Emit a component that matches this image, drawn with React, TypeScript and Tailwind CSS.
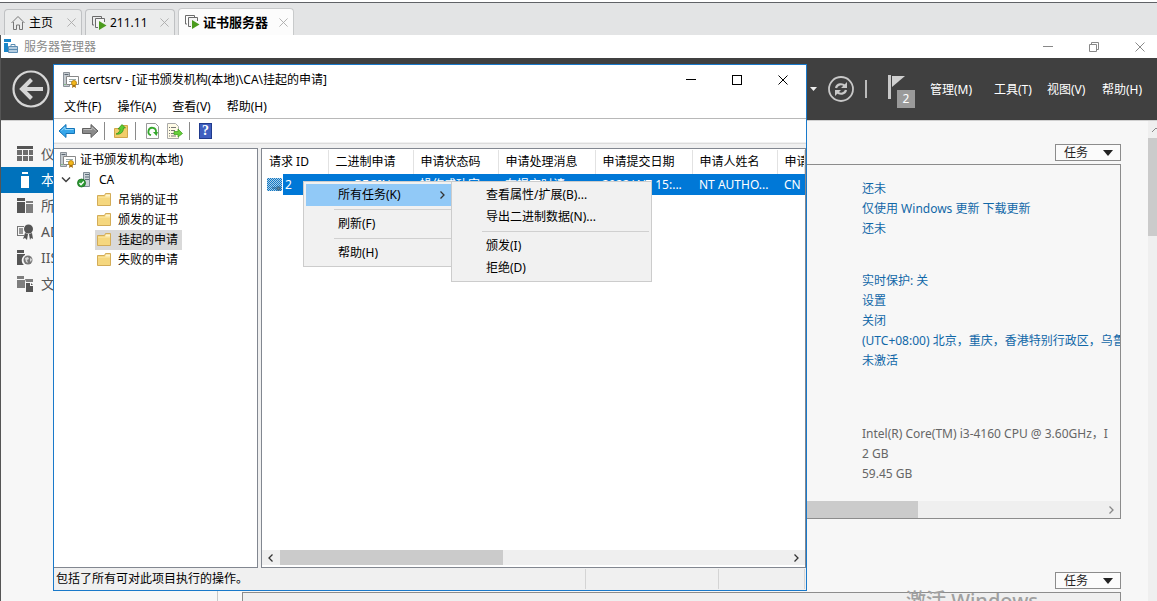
import React from "react";

const sideItems = [
  { label: "仪表板", icon: "dashboard" },
  { label: "本地服务器", icon: "local", active: true },
  { label: "所有服务器", icon: "all" },
  { label: "AD CS", icon: "cert" },
  { label: "IIS", icon: "iis" },
  { label: "文件和存储服务", icon: "files" },
];

const folders = ["吊销的证书", "颁发的证书", "挂起的申请", "失败的申请"];

const SideIcon: React.FC<{ name: string }> = ({ name }) => (
  <svg width="18" height="16" viewBox="0 0 18 16" fill="currentColor" className="shrink-0">
    {name === "dashboard" && (
      <>
        <path d="M1 0h16v3H1z" />
        <path d="M1 4h5v5H1zM7 4h5v5H7zM13 4h4v5h-4zM1 10h5v5H1zM7 10h5v5H7zM13 10h4v5h-4z" opacity=".85" />
      </>
    )}
    {name === "local" && <path d="M6 0h6v2H6zM5 4h8v12H5z" />}
    {name === "all" && (
      <>
        <path d="M1 0h8v3H1zM1 4h8v11H1z" />
        <path d="M10 3h7v2h-7zM10 6h7v9h-7z" opacity=".75" />
      </>
    )}
    {name === "cert" && (
      <>
        <path d="M1 2h7v1H2v8h6v1H1z" opacity=".8" />
        <path d="M3 4h4v6H3z" opacity=".6" />
        <circle cx="12.5" cy="5" r="4.5" />
        <path d="M9 9l3 1-1 6-2-2-2 1zM16 9l-3 1 1 6 1-2 2 1z" />
      </>
    )}
    {name === "iis" && (
      <>
        <path d="M1 0h7v3H1zM1 4h8v1a6 6 0 0 0-1 10H1z" />
        <circle cx="12" cy="10" r="4.5" opacity=".8" />
        <path d="M9 8l3-1 1 2-2 1 1 3-2-1zM14 8l2 1-1 3-1-1z" fill="#d8d8d8" />
      </>
    )}
    {name === "files" && (
      <>
        <path d="M1 0h7v3H1zM1 4h8v8H1zM9 3h8v3h-7z" opacity=".75" />
        <path d="M10 7h4v3h3v6h-7z" />
        <path d="M15 7l2 2h-2z" />
      </>
    )}
  </svg>
);

const FolderIcon: React.FC = () => (
  <svg width="16" height="16" viewBox="0 0 16 16" className="shrink-0">
    <path d="M1.5 3.5h7l1-2h5v12h-13z" fill="#f5d77f" stroke="#d3ac58" />
    <path d="M10 2.5h4v2H9z" fill="#fff4c8" />
    <path d="M2 5h7.5l1-1H14v1.5H2z" fill="#fbe9ac" />
  </svg>
);

const CertIcon: React.FC = () => (
  <svg width="16" height="16" viewBox="0 0 16 16" className="shrink-0">
    <path d="M.5.5h6v14h-6z" fill="#c5cbd0" stroke="#8b9299" />
    <path d="M1.5 2.5h4" stroke="#5b6670" />
    <path d="M3.5 4.5h12v8h-12z" fill="#fff" stroke="#888" />
    <path d="M6 7.5h7M6 9.5h3" stroke="#9aa" />
    <circle cx="11" cy="11" r="2.5" fill="#f3b81c" stroke="#b17a08" strokeWidth=".8" />
    <path d="M9.5 13l-.5 3 2-1.2 2 1.2-.5-3z" fill="#a8700c" />
    <path d="M1.5 12h1v1h-1z" fill="#3fa83f" />
  </svg>
);

const VmIcon: React.FC = () => (
  <svg width="16" height="16" viewBox="0 0 16 16" className="shrink-0">
    <path d="M3 10H1.5V1.5h9V3" fill="none" stroke="#6b6b6b" />
    <path d="M13.5 7V3.5h-9v9H7" fill="#f4f4f4" stroke="#6b6b6b" />
    <path d="M8 6l7.5 4.5L8 15z" fill="#4b9b1d" />
  </svg>
);

const Cross: React.FC<{ size: number; className?: string }> = ({ size, className }) => (
  <svg width={size} height={size} viewBox="0 0 10 10" className={className}>
    <path d="M.5.5l9 9M9.5.5l-9 9" stroke="currentColor" fill="none" />
  </svg>
);

const Chevron: React.FC<{ className?: string }> = ({ className }) => (
  <svg width="8" height="8" viewBox="0 0 8 8" className={className}>
    <path d="M2.5.5L6 4 2.5 7.5" stroke="currentColor" strokeWidth="1.3" fill="none" />
  </svg>
);

const TaskButton: React.FC = () => (
  <button className="flex h-[17px] w-[66px] items-center justify-between border border-[#8c8c8c] bg-[#fbfbfb] pl-2 pr-[7px] text-[#222]">
    任务
    <svg width="10" height="6" viewBox="0 0 10 6">
      <path d="M0 0h10L5 6z" fill="#222" />
    </svg>
  </button>
);

const Tabs: React.FC = () => (
  <div className="flex h-[35px] shrink-0 items-end gap-[3px] border-t-2 border-white bg-[#e3e4e5] pl-1 shadow-[inset_0_1px_0_#606266]">
    <div className="flex h-[26px] w-[78px] items-center rounded-t border border-b-0 border-[#bfc1c3] bg-[#ebecec] px-[5px]">
      <svg width="16" height="16" viewBox="0 0 16 16" fill="none" stroke="#777">
        <path d="M1.5 8L8 1.5 14.5 8M3.5 7v7.5h3V10h3v4.5h3V7" />
      </svg>
      <button className="ml-[3px]">主页</button>
      <Cross size={9} className="ml-auto text-[#aaa]" />
    </div>
    <div className="flex h-[26px] w-[90px] items-center rounded-t border border-b-0 border-[#bfc1c3] bg-[#ebecec] px-[5px]">
      <VmIcon />
      <button className="ml-[3px]">211.11</button>
      <Cross size={9} className="ml-auto text-[#aaa]" />
    </div>
    <div className="flex h-[27px] w-[116px] items-center rounded-t border border-b-0 border-[#c8cacb] bg-[#fcfcfc] px-[5px]">
      <VmIcon />
      <button className="ml-[3px] text-[13px] font-bold">证书服务器</button>
      <Cross size={9} className="ml-auto text-[#aaa]" />
    </div>
  </div>
);

const Header: React.FC = () => (
  <header className="flex h-[62px] shrink-0 items-center bg-[#404040] pl-[11px] pr-[13px] text-white">
    <button aria-label="后退">
      <svg width="38" height="38" viewBox="0 0 38 38" fill="none" stroke="#d6d6d6">
        <circle cx="19" cy="19" r="17.5" strokeWidth="2.2" />
        <path d="M31 19H10M19.5 9.5L10 19l9.5 9.5" strokeWidth="4" />
      </svg>
    </button>
    <div className="ml-auto flex items-center">
      <svg width="8" height="4" viewBox="0 0 8 4" className="mr-[9px]">
        <path d="M0 0h7L3.5 4z" fill="#eee" />
      </svg>
      <button aria-label="刷新">
        <svg width="28" height="28" viewBox="0 0 28 28" fill="none" stroke="#c8c8c8">
          <circle cx="14" cy="14" r="12" strokeWidth="1.8" />
          <path d="M9 13c1-4 6-5 9-2M19 15c-1 4-6 5-9 2" strokeWidth="2.2" />
          <path d="M20 7v6h-6zM8 21v-6h6z" fill="#c8c8c8" stroke="none" />
        </svg>
      </button>
      <span className="ml-2.5 h-[18px] w-0.5 bg-[#bbb]" />
      <button aria-label="通知" className="relative ml-5 h-[38px] w-7">
        <svg width="20" height="26" viewBox="0 0 20 26" className="absolute left-0 top-1">
          <path d="M1 1h3v24H1z" fill="#c8c8c8" />
          <path d="M5 2h13L5 13z" fill="#d0d0d0" />
        </svg>
        <span className="absolute bottom-0 right-0 h-[18px] w-[18px] bg-[#9a9a9a] text-center leading-[18px]">2</span>
      </button>
      <nav className="ml-[15px] flex pt-0.5">
        <button className="w-16 text-left">管理(M)</button>
        <button className="w-[53px] text-left">工具(T)</button>
        <button className="w-[55px] text-left">视图(V)</button>
        <button className="w-[42px] whitespace-nowrap text-left">帮助(H)</button>
      </nav>
    </div>
  </header>
);

const Properties: React.FC = () => (
  <div className="flex h-[355px] flex-col overflow-hidden border border-[#8c8c8c]">
    <div className="ml-auto w-[258px] flex-1 whitespace-nowrap pt-3.5 leading-5 text-[#1168a8]">
      <a href="#" className="block">还未</a>
      <a href="#" className="block">仅使用 Windows 更新 下载更新</a>
      <a href="#" className="block">还未</a>
      <div className="mt-8">
        <a href="#" className="block">实时保护: 关</a>
        <a href="#" className="block">设置</a>
        <a href="#" className="block">关闭</a>
        <a href="#" className="block">(UTC+08:00) 北京，重庆，香港特别行政区，乌鲁木齐</a>
        <a href="#" className="block">未激活</a>
      </div>
      <div className="mt-[53px] text-[#666]">
        <p>Intel(R) Core(TM) i3-4160 CPU @ 3.60GHz，I</p>
        <p>2 GB</p>
        <p>59.45 GB</p>
      </div>
    </div>
    <div className="flex h-[17px] shrink-0 items-center bg-[#efefef] pr-[5px]">
      <div className="h-full w-[675px] bg-[#cbcbcb]" />
      <Chevron className="ml-auto text-[#888]" />
    </div>
  </div>
);

const ToolSep = () => <span className="h-[18px] w-px bg-[#8a8a8a]" />;

const Toolbar: React.FC = () => (
  <div className="flex h-6 items-center border-t border-[#b8b8b8] bg-white pl-1">
    <button aria-label="后退">
      <svg width="18" height="16" viewBox="0 0 18 16" className="block">
        <path d="M1 8l7-6.5v4h8.5v5H8v4z" fill="#36a6ea" stroke="#1474b8" />
        <path d="M3.5 7.5L7 4.3v2.2h8.5" fill="none" stroke="#90d6fb" />
      </svg>
    </button>
    <button aria-label="前进" className="ml-[5px]">
      <svg width="18" height="16" viewBox="0 0 18 16" className="block">
        <path d="M17 8l-7-6.5v4H1.5v5H10v4z" fill="#8b8b8b" stroke="#606060" />
        <path d="M2.5 6.5H11V4.3l3.5 3.2" fill="none" stroke="#bbb" />
      </svg>
    </button>
    <span className="ml-[5px]" />
    <ToolSep />
    <button aria-label="上一级" className="ml-2">
      <svg width="16" height="16" viewBox="0 0 16 16" className="block">
        <path d="M1.5 5.5h6l1-3h6v12h-13z" fill="#f2cd6a" stroke="#d0a64c" />
        <path d="M3 11c3-1 4-3 4-5H5l4-4.5L12.500 5h-2c0 4-3 7-7.500 6z" fill="#5ccc35" stroke="#2e8f17" strokeWidth=".7" />
      </svg>
    </button>
    <span className="ml-[6px]" />
    <ToolSep />
    <button aria-label="刷新" className="ml-2">
      <svg width="16" height="16" viewBox="0 0 16 16" className="block">
        <path d="M2.5.5h9l3 3v12h-12z" fill="#fdfdfd" stroke="#999" />
        <path d="M7 12.2A3.8 3.8 0 1 1 12 9" fill="none" stroke="#35a72c" strokeWidth="1.8" />
        <path d="M9 9h5l-1.5 4z" fill="#35a72c" />
      </svg>
    </button>
    <button aria-label="导出列表" className="ml-[6px]">
      <svg width="17" height="16" viewBox="0 0 17 16" className="block">
        <path d="M1.5.5h8l3 3v12h-11z" fill="#fffbe6" stroke="#aaa" />
        <path d="M3 4.5h1M5 4.5h5M3 7.5h1M5 7.5h4M3 10.5h1M5 10.5h4M3 13h1M5 13h5" stroke="#777" />
        <path d="M8 8.5h4V6l4.5 4.5L12 14v-2.5H8z" fill="#66cf39" stroke="#399b1b" strokeWidth=".7" />
      </svg>
    </button>
    <span className="ml-[6px]" />
    <ToolSep />
    <button aria-label="帮助" className="ml-[9px] h-4 w-[13px] border border-[#203a8c] bg-[#3f5fc0] font-['Liberation_Serif',serif] text-[14px] font-bold leading-[14px] text-white">
      ?
    </button>
  </div>
);

const Tree: React.FC = () => (
  <div className="w-[204px] shrink-0 border border-l-0 border-[#828790] bg-white pt-px">
    <div className="flex h-5 items-center gap-1 pl-1.5">
      <CertIcon />
      证书颁发机构(本地)
    </div>
    <div className="flex h-5 items-center pl-[7px]">
      <svg width="10" height="6" viewBox="0 0 10 6" fill="none" stroke="#404040" strokeWidth="1.5">
        <path d="M1 .5l4 4 4-4" />
      </svg>
      <svg width="16" height="16" viewBox="0 0 16 16" className="ml-1.5">
        <path d="M6.5.5h6v14h-6z" fill="#cbd3d8" stroke="#7e8b94" />
        <path d="M8 2.5h4M8 5h4M8 7.5h4" stroke="#5e6f7a" />
        <circle cx="4.5" cy="11" r="4" fill="#2d9b34" stroke="#18701f" strokeWidth=".8" />
        <path d="M2.5 11l1.5 1.7L6.8 9.5" fill="none" stroke="#fff" strokeWidth="1.4" />
      </svg>
      <span className="ml-1.5">CA</span>
    </div>
    {folders.map((f) => (
      <div key={f} className="flex h-5 items-center pl-[41px]">
        <span className={`flex h-5 items-center gap-1.5 pl-px pr-1 ${f === "挂起的申请" ? "bg-[#d9d9d9]" : ""}`}>
          <FolderIcon />
          {f}
        </span>
      </div>
    ))}
  </div>
);

const RequestList: React.FC = () => (
  <div className="flex min-w-0 flex-1 flex-col overflow-hidden border border-[#828790] bg-white pt-px">
    <table className="w-full table-fixed border-collapse whitespace-nowrap text-left">
      <colgroup>
        <col className="w-[66px]" />
        <col className="w-[85px]" />
        <col className="w-[85px]" />
        <col className="w-[97px]" />
        <col className="w-[97px]" />
        <col className="w-[85px]" />
        <col />
      </colgroup>
      <thead>
        <tr className="h-6 [&>th]:overflow-hidden [&>th]:border-r [&>th]:border-[#e2e2e2] [&>th]:p-0 [&>th]:pl-[7px] [&>th]:font-normal">
          <th>请求 ID</th>
          <th>二进制申请</th>
          <th>申请状态码</th>
          <th>申请处理消息</th>
          <th>申请提交日期</th>
          <th>申请人姓名</th>
          <th>申请国家</th>
        </tr>
      </thead>
      <tbody>
        <tr className="h-[21px] bg-[#0078d7] text-white [&>td]:overflow-hidden [&>td]:p-0 [&>td]:pl-[7px]">
          <td className="!pl-0">
            <span className="flex items-center gap-0.5">
              <span className="flex h-[21px] w-[21px] items-center bg-white pl-[5px]">
                <svg width="16" height="15" viewBox="0 0 16 15">
                  <defs>
                    <pattern id="dots" width="2" height="2" patternUnits="userSpaceOnUse">
                      <path d="M0 0h1v1H0zM1 1h1v1H1z" fill="#1477c4" />
                    </pattern>
                  </defs>
                  <path d="M0 1h15v13H0z" fill="#a9cfe8" />
                  <path d="M0 1h15v13H0z" fill="url(#dots)" />
                  <path d="M5 11h4M10 10h3v3h-3z" stroke="#245f8a" fill="#6a8795" />
                </svg>
              </span>
              2
            </span>
          </td>
          <td>-----BEGIN ...</td>
          <td>操作成功完...</td>
          <td>在提交时请...</td>
          <td>2022/4/7 15:...</td>
          <td>NT AUTHO...</td>
          <td>CN</td>
        </tr>
      </tbody>
    </table>
    <div className="mb-0.5 mt-auto flex h-[15px] items-center bg-[#efefef] pr-[5px]">
      <Chevron className="mx-[5px] rotate-180 text-[#333]" />
      <div className="h-full w-[223px] bg-[#cbcbcb]" />
      <Chevron className="ml-auto text-[#333]" />
    </div>
  </div>
);

const MenuItem: React.FC<{ children: React.ReactNode; active?: boolean }> = ({ children, active }) => (
  <button
    role="menuitem"
    className={`flex h-[22px] w-full items-center justify-between pl-8 pr-[5px] ${active ? "bg-[#91c9f7]" : ""}`}
  >
    {children}
  </button>
);

const MenuLine = () => (
  <div className="flex h-[7px] items-center pl-7">
    <span className="h-px w-full bg-[#d0d0d0]" />
  </div>
);

const ContextMenu: React.FC = () => (
  <>
    <div role="menu" className="absolute left-[249px] top-[116px] w-[149px] border border-[#ccc] bg-[#f1f1f1] py-0.5 pl-0.5">
      <MenuItem active>
        所有任务(K)
        <Chevron className="text-[#333]" />
      </MenuItem>
      <MenuLine />
      <MenuItem>刷新(F)</MenuItem>
      <MenuLine />
      <MenuItem>帮助(H)</MenuItem>
    </div>
    <div role="menu" className="absolute left-[397px] top-[116px] w-[201px] border border-[#ccc] bg-[#f1f1f1] p-0.5">
      <MenuItem>查看属性/扩展(B)...</MenuItem>
      <MenuItem>导出二进制数据(N)...</MenuItem>
      <MenuLine />
      <MenuItem>颁发(I)</MenuItem>
      <MenuItem>拒绝(D)</MenuItem>
    </div>
  </>
);

const CertWindow: React.FC = () => (
  <section className="absolute left-[53px] top-16 flex h-[527px] w-[754px] flex-col border border-[#1979ca] bg-[#f0f0f0]">
    <div className="flex h-[29px] items-center bg-white pl-[9px] pr-[18px]">
      <CertIcon />
      <h1 className="ml-1">certsrv - [证书颁发机构(本地)\CA\挂起的申请]</h1>
      <div className="ml-auto flex items-center gap-9">
        <button aria-label="最小化" className="h-px w-2.5 bg-black" />
        <button aria-label="最大化" className="h-2.5 w-2.5 border border-black" />
        <button aria-label="关闭">
          <Cross size={10} />
        </button>
      </div>
    </div>
    <nav className="flex h-6 items-center gap-4 bg-white pl-2.5 pt-0.5">
      <button>文件(F)</button>
      <button>操作(A)</button>
      <button>查看(V)</button>
      <button>帮助(H)</button>
    </nav>
    <Toolbar />
    <div className="mt-px flex min-h-0 flex-1 gap-[3px] border-t border-[#dcdcdc] pt-1">
      <Tree />
      <RequestList />
    </div>
    <footer className="flex h-[22px] items-center pl-0.5">
      包括了所有可对此项目执行的操作。
      <span className="ml-auto h-5 w-[134px] border-x border-[#d4d4d4]" />
      <span className="mr-px h-5 w-[86px] border-r border-[#d4d4d4]" />
    </footer>
    <ContextMenu />
  </section>
);

const App: React.FC = () => {
  return (
    <div className="relative flex h-screen flex-col overflow-hidden bg-[#f7f7f7] font-['Noto_Sans','Noto_Sans_CJK_SC',sans-serif] text-[12px] leading-4 text-black">
      <Tabs />
      <div className="flex min-h-0 flex-1 flex-col border-l border-[#555]">
        <div className="flex h-[23px] shrink-0 items-center bg-white pl-[3px] pr-3 text-[#8a8a8a]">
          <svg width="15" height="15" viewBox="0 0 15 15">
            <path d="M0 0h7v3H0zM0 4h4v9H0z" fill="#1b86c8" />
            <path d="M4.5 7.5h9v6h-9z" fill="#b5cde0" stroke="#5d8db3" />
            <path d="M7 7V5.5h4V7M4 10.5h10" fill="none" stroke="#5d8db3" />
          </svg>
          <span className="ml-[5px]">服务器管理器</span>
          <div className="ml-auto flex items-center gap-9">
            <span className="h-px w-2.5 bg-[#888]" />
            <svg width="10" height="10" viewBox="0 0 10 10" fill="none" stroke="#888">
              <path d="M.5 2.5h7v7h-7zM2.5 2.5v-2h7v7h-2" />
            </svg>
            <Cross size={10} />
          </div>
        </div>
        <Header />
        <div className="flex min-h-0 flex-1 border-t border-[#d0d0d0]">
          <aside className="w-[217px] shrink-0 border-r border-[#c8c8c8] pt-5">
            {sideItems.map((item) => (
              <a
                key={item.label}
                href="#"
                className={`flex h-[26px] items-center gap-[7px] pl-[15px] text-[14px] ${item.active ? "bg-[#0072bc] text-white" : "text-[#555]"}`}
              >
                <SideIcon name={item.icon} />
                {item.label}
              </a>
            ))}
          </aside>
          <main className="min-w-0 flex-1 overflow-hidden pl-6 pr-[27px] pt-[23px]">
            <div className="mb-[3px] flex justify-end">
              <TaskButton />
            </div>
            <Properties />
            <div className="mb-[3px] mt-[53px] flex justify-end">
              <TaskButton />
            </div>
            <div className="relative h-16 border border-[#8c8c8c] bg-[#efefef]">
              <p className="absolute right-[82px] -top-1 whitespace-nowrap text-[20px] font-medium leading-6 text-[#a0a0a0]">激活 Windows</p>
            </div>
          </main>
          <div className="flex w-[9px] shrink-0 flex-col overflow-hidden bg-[#efefef]">
            <svg width="16" height="17" viewBox="0 0 16 17" fill="none" stroke="#888" className="shrink-0">
              <path d="M4 11l4-4 4 4" />
            </svg>
            <div className="h-[98px] bg-[#cbcbcb]" />
          </div>
        </div>
      </div>
      <CertWindow />
    </div>
  );
};

export default App;
